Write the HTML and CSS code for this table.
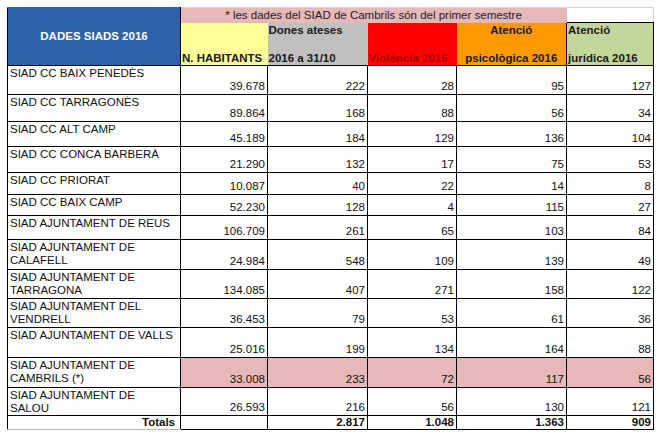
FILE: index.html
```html
<!DOCTYPE html>
<html lang="ca">
<head>
<meta charset="utf-8">
<title>Dades SIADS 2016</title>
<link rel="stylesheet" href="styles.css">
</head>
<body>
<table class="siads">
  <colgroup>
    <col class="c-name"><col class="c-hab"><col class="c-dones"><col class="c-viol"><col class="c-psico"><col class="c-jur">
  </colgroup>
  <tbody>
    <tr class="h15">
      <td class="title" rowspan="2">DADES SIADS 2016</td>
      <td class="notice" colspan="4">* les dades del SIAD de Cambrils són del primer semestre</td>
      <td class="blank"></td>
    </tr>
    <tr class="h43 head">
      <td class="hab">N. HABITANTS</td>
      <td class="dones">Dones ateses<br><br>2016 a 31/10</td>
      <td class="viol">Violència 2016</td>
      <td class="psico">Atenció<br><br>psicològica 2016</td>
      <td class="jur">Atenció<br><br>jurídica 2016</td>
    </tr>
    <tr class="h29"><td class="name">SIAD CC BAIX PENEDÈS</td><td class="num">39.678</td><td class="num">222</td><td class="num">28</td><td class="num">95</td><td class="num">127</td></tr>
    <tr class="h27"><td class="name">SIAD CC TARRAGONÈS</td><td class="num">89.864</td><td class="num">168</td><td class="num">88</td><td class="num">56</td><td class="num">34</td></tr>
    <tr class="h25"><td class="name">SIAD CC ALT CAMP</td><td class="num">45.189</td><td class="num">184</td><td class="num">129</td><td class="num">136</td><td class="num">104</td></tr>
    <tr class="h26"><td class="name">SIAD CC CONCA BARBERÀ</td><td class="num">21.290</td><td class="num">132</td><td class="num">17</td><td class="num">75</td><td class="num">53</td></tr>
    <tr class="h22"><td class="name">SIAD CC PRIORAT</td><td class="num">10.087</td><td class="num">40</td><td class="num">22</td><td class="num">14</td><td class="num">8</td></tr>
    <tr class="h21"><td class="name">SIAD CC BAIX CAMP</td><td class="num">52.230</td><td class="num">128</td><td class="num">4</td><td class="num">115</td><td class="num">27</td></tr>
    <tr class="h24"><td class="name">SIAD AJUNTAMENT DE REUS</td><td class="num">106.709</td><td class="num">261</td><td class="num">65</td><td class="num">103</td><td class="num">84</td></tr>
    <tr class="h30"><td class="name">SIAD AJUNTAMENT DE<br>CALAFELL</td><td class="num">24.984</td><td class="num">548</td><td class="num">109</td><td class="num">139</td><td class="num">49</td></tr>
    <tr class="h29"><td class="name">SIAD AJUNTAMENT DE<br>TARRAGONA</td><td class="num">134.085</td><td class="num">407</td><td class="num">271</td><td class="num">158</td><td class="num">122</td></tr>
    <tr class="h29"><td class="name">SIAD AJUNTAMENT DEL<br>VENDRELL</td><td class="num">36.453</td><td class="num">79</td><td class="num">53</td><td class="num">61</td><td class="num">36</td></tr>
    <tr class="h30"><td class="name">SIAD AJUNTAMENT DE VALLS</td><td class="num">25.016</td><td class="num">199</td><td class="num">134</td><td class="num">164</td><td class="num">88</td></tr>
    <tr class="h30 partial"><td class="name">SIAD AJUNTAMENT DE<br>CAMBRILS (*)</td><td class="num">33.008</td><td class="num">233</td><td class="num">72</td><td class="num">117</td><td class="num">56</td></tr>
    <tr class="h28"><td class="name">SIAD AJUNTAMENT DE<br>SALOU</td><td class="num">26.593</td><td class="num">216</td><td class="num">56</td><td class="num">130</td><td class="num">121</td></tr>
    <tr class="h14 totals"><td class="tot-label">Totals</td><td class="num"></td><td class="num">2.817</td><td class="num">1.048</td><td class="num">1.363</td><td class="num">909</td></tr>
  </tbody>
</table>
</body>
</html>
```

FILE: styles.css
```css
html, body {
  margin: 0;
  background: #ffffff;
}
body {
  padding: 7px 0 0 7px;
  font-family: "Liberation Sans", Arial, sans-serif;
  font-size: 11.5px;
  color: #111;
}
.siads {
  border-collapse: collapse;
  table-layout: fixed;
  width: 646px;
}
.c-name { width: 173px; }
.c-hab { width: 87px; }
.c-dones { width: 100px; }
.c-viol { width: 89px; }
.c-psico { width: 110px; }
.c-jur { width: 87px; }

.siads td {
  border: 1px solid #000;
  padding: 0 1px;
  line-height: 13px;
  white-space: nowrap;
  overflow: hidden;
}
.h14 { height: 14px; }
.h15 { height: 15px; }
.h21 { height: 21px; }
.h22 { height: 22px; }
.h24 { height: 24px; }
.h25 { height: 25px; }
.h26 { height: 26px; }
.h27 { height: 27px; }
.h28 { height: 28px; }
.h29 { height: 29px; }
.h30 { height: 30px; }
.h43 { height: 43px; }

.siads td.title {
  background: #2d62aa;
  color: #ffffff;
  font-weight: bold;
  text-align: center;
  vertical-align: middle;
  border-top-color: #2d62aa;
}
.siads td.notice {
  background: #e6b9b8;
  color: #222;
  text-align: center;
  vertical-align: middle;
  line-height: 13px;
  border: 1px solid #d9d9d9;
  border-bottom: none;
  border-right-color: #e6b9b8;
}
.siads td.blank {
  background: #ffffff;
  border: 1px solid #d4d4d4;
  border-bottom-color: #000;
}
.head td {
  font-weight: bold;
  vertical-align: bottom;
  color: #1a1a1a;
  border-top: none;
  line-height: 14px;
}
.head td.hab { background: #ffff99; border-right: none; }
.head td.dones { background: #c0c0c0; border-left: none; border-right: none; }
.head td.viol { background: #ff0000; color: #a80000; border-left: none; border-right: none; }
.head td.psico { background: #ff9900; text-align: center; border-left: none; }
.head td.jur { background: #c4d79b; border-top: 1px solid #000; }

.siads td.name {
  vertical-align: top;
  padding-top: 1px;
  padding-left: 2px;
}
.siads td.num {
  text-align: right;
  vertical-align: bottom;
  padding-right: 2px;
  padding-bottom: 1px;
}
.partial td.num { background: #e6b9b8; }
.totals td {
  font-weight: bold;
  vertical-align: bottom;
}
.siads .totals td.num { padding-bottom: 0; }
.siads td.tot-label {
  text-align: right;
  padding-right: 5px;
  border-bottom-color: #bdbdbd;
}
```
